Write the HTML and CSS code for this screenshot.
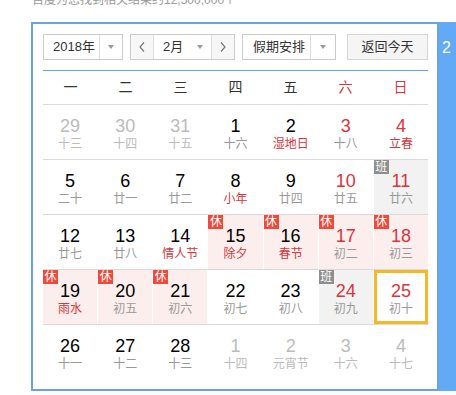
FILE: index.html
```html
<!DOCTYPE html>
<html lang="zh-CN">
  <head>
    <meta charset="UTF-8" />
    <meta name="viewport" content="width=device-width, initial-scale=1.0" />
    <link rel="stylesheet" href="styles.css">
    <title>万年历</title>
  </head>
  <body>
    <div class="result">百度为您找到相关结果约12,500,000个</div>

    <div class="wrap">
      <div id="calendar">
        <!-- toolbar -->
        <div class="toolbar">
          <div class="select year">
            <span class="sel-text">2018年</span>
            <span class="sel-arrow"><i class="tri"></i></span>
          </div>
          <div class="select month">
            <span class="nav prev">
              <svg width="6" height="10" viewBox="0 0 6 10"><polyline points="5,0.5 1,5 5,9.5" fill="none" stroke="#777" stroke-width="1.2" /></svg>
            </span>
            <span class="sel-text">2月</span>
            <span class="sel-arrow plain"><i class="tri"></i></span>
            <span class="nav next">
              <svg width="6" height="10" viewBox="0 0 6 10"><polyline points="1,0.5 5,5 1,9.5" fill="none" stroke="#777" stroke-width="1.2" /></svg>
            </span>
          </div>
          <div class="select holiday">
            <span class="sel-text">假期安排</span>
            <span class="sel-arrow"><i class="tri"></i></span>
          </div>
          <button class="today-btn" type="button">返回今天</button>
        </div>

        <!-- table -->
        <div class="table">
          <div class="week">
            <span>一</span><span>二</span><span>三</span><span>四</span><span>五</span>
            <span class="red">六</span><span class="red">日</span>
          </div>

          <div class="row">
            <div class="day other"><b>29</b><em>十三</em></div>
            <div class="day other"><b>30</b><em>十四</em></div>
            <div class="day other"><b>31</b><em>十五</em></div>
            <div class="day"><b>1</b><em>十六</em></div>
            <div class="day"><b>2</b><em class="fest">湿地日</em></div>
            <div class="day weekend"><b>3</b><em>十八</em></div>
            <div class="day weekend"><b>4</b><em class="fest">立春</em></div>
          </div>

          <div class="row">
            <div class="day"><b>5</b><em>二十</em></div>
            <div class="day"><b>6</b><em>廿一</em></div>
            <div class="day"><b>7</b><em>廿二</em></div>
            <div class="day"><b>8</b><em class="fest">小年</em></div>
            <div class="day"><b>9</b><em>廿四</em></div>
            <div class="day weekend"><b>10</b><em>廿五</em></div>
            <div class="day weekend work"><span class="badge">班</span><b>11</b><em>廿六</em></div>
          </div>

          <div class="row">
            <div class="day"><b>12</b><em>廿七</em></div>
            <div class="day"><b>13</b><em>廿八</em></div>
            <div class="day"><b>14</b><em class="fest">情人节</em></div>
            <div class="day rest"><span class="badge">休</span><b>15</b><em class="fest">除夕</em></div>
            <div class="day rest"><span class="badge">休</span><b>16</b><em class="fest">春节</em></div>
            <div class="day weekend rest"><span class="badge">休</span><b>17</b><em>初二</em></div>
            <div class="day weekend rest"><span class="badge">休</span><b>18</b><em>初三</em></div>
          </div>

          <div class="row">
            <div class="day rest"><span class="badge">休</span><b>19</b><em class="fest">雨水</em></div>
            <div class="day rest"><span class="badge">休</span><b>20</b><em>初五</em></div>
            <div class="day rest"><span class="badge">休</span><b>21</b><em>初六</em></div>
            <div class="day"><b>22</b><em>初七</em></div>
            <div class="day"><b>23</b><em>初八</em></div>
            <div class="day weekend work"><span class="badge">班</span><b>24</b><em>初九</em></div>
            <div class="day weekend today"><b>25</b><em>初十</em></div>
          </div>

          <div class="row">
            <div class="day"><b>26</b><em>十一</em></div>
            <div class="day"><b>27</b><em>十二</em></div>
            <div class="day"><b>28</b><em>十三</em></div>
            <div class="day other"><b>1</b><em>十四</em></div>
            <div class="day other"><b>2</b><em>元宵节</em></div>
            <div class="day other"><b>3</b><em>十六</em></div>
            <div class="day other"><b>4</b><em>十七</em></div>
          </div>
        </div>
      </div>

      <div class="side">2</div>
    </div>
  </body>
</html>
```

FILE: styles.css
```css
:root {
  --blue-border: #6ba3e0;
  --blue-side: #62a9f6;
  --red: #d7363c;
  --gray-text: #999;
  --other-text: #bbb;
  --line: #d9d9d9;
  --rest-bg: #fdeeee;
  --work-bg: #f2f2f2;
}

body {
  margin: 0;
  padding-left: 31px;
  font-family: "Liberation Sans", "Noto Sans CJK SC", sans-serif;
  color: #333;
  background: #fff;
  overflow: hidden;
}

/* search result line, cut at the top */
.result {
  margin-top: -8px;
  padding-left: 1px;
  font-size: 12px;
  line-height: 16px;
  color: var(--gray-text);
}

.wrap {
  display: flex;
  margin-top: 14px;
}

#calendar {
  width: 385px;
  padding: 10px 9px 10px 10px;
  border: 2px solid var(--blue-border);
  flex-shrink: 0;
}

.side {
  flex: 1;
  padding: 16px 3px;
  background-color: var(--blue-side);
  color: #fff;
  font-size: 16px;
  line-height: 20px;
  white-space: nowrap;
  overflow: hidden;
}

/* toolbar */
.toolbar {
  display: flex;
  height: 26px;
}

.select {
  display: flex;
  box-sizing: border-box;
  height: 26px;
  border: 1px solid #ccc;
  font-size: 13px;
  line-height: 24px;
  background: #fff;
}

.select .sel-text {
  flex: 1;
  padding-left: 9px;
  white-space: nowrap;
}

.select .sel-arrow {
  display: flex;
  align-items: center;
  justify-content: center;
  width: 22px;
  border-left: 1px solid #ddd;
}

.select .sel-arrow.plain {
  border-left: none;
}

.tri {
  width: 0;
  height: 0;
  border-left: 3px solid transparent;
  border-right: 3px solid transparent;
  border-top: 4px solid #999;
}

.year {
  width: 80px;
}

.month {
  width: 105px;
  margin-left: 7px;
}

.month .nav {
  display: flex;
  align-items: center;
  justify-content: center;
  width: 22px;
  background: #f7f7f7;
}

.month .prev {
  border-right: 1px solid #ddd;
}

.month .next {
  border-left: 1px solid #ddd;
}

.holiday {
  width: 94px;
  margin-left: 7px;
}

.holiday .sel-text {
  padding-left: 10px;
}

.holiday .sel-arrow {
  width: 24px;
}

.today-btn {
  width: 81px;
  height: 26px;
  margin-left: 11px;
  padding: 0;
  border: 1px solid #d6d6d6;
  background: #f5f5f5;
  color: #333;
  font-family: inherit;
  font-size: 13px;
  line-height: 24px;
}

/* table */
.table {
  margin-top: 10px;
  border-top: 1px solid var(--blue-border);
}

.week {
  display: grid;
  grid-template-columns: repeat(7, 1fr);
  height: 33px;
  border-bottom: 1px solid var(--line);
  font-size: 14px;
  line-height: 33px;
  text-align: center;
}

.week .red {
  color: var(--red);
}

.row {
  display: grid;
  grid-template-columns: repeat(7, 1fr);
  column-gap: 1px;
  border-bottom: 1px solid var(--line);
}

.row:last-child {
  border-bottom: none;
}

.day {
  position: relative;
  box-sizing: border-box;
  height: 54px;
  padding-top: 11px;
  text-align: center;
}

.day b {
  display: block;
  font-weight: normal;
  font-size: 18px;
  line-height: 20px;
  color: #000;
}

.day em {
  display: block;
  font-style: normal;
  font-size: 12px;
  line-height: 16px;
  color: var(--gray-text);
}

.day em.fest {
  color: var(--red);
}

.day.weekend b {
  color: var(--red);
}

.day.other b,
.day.other em {
  color: var(--other-text);
}

.day.rest {
  background-color: var(--rest-bg);
}

.day.work {
  background-color: var(--work-bg);
}

.day.today {
  outline: 3px solid #f6b829;
  outline-offset: -3px;
}

.badge {
  position: absolute;
  top: 0;
  left: 0;
  width: 15px;
  height: 14px;
  font-size: 12px;
  line-height: 14px;
  color: #fff;
  background-color: #ee4a3b;
}

.work .badge {
  background-color: #8e8e8e;
}
```
